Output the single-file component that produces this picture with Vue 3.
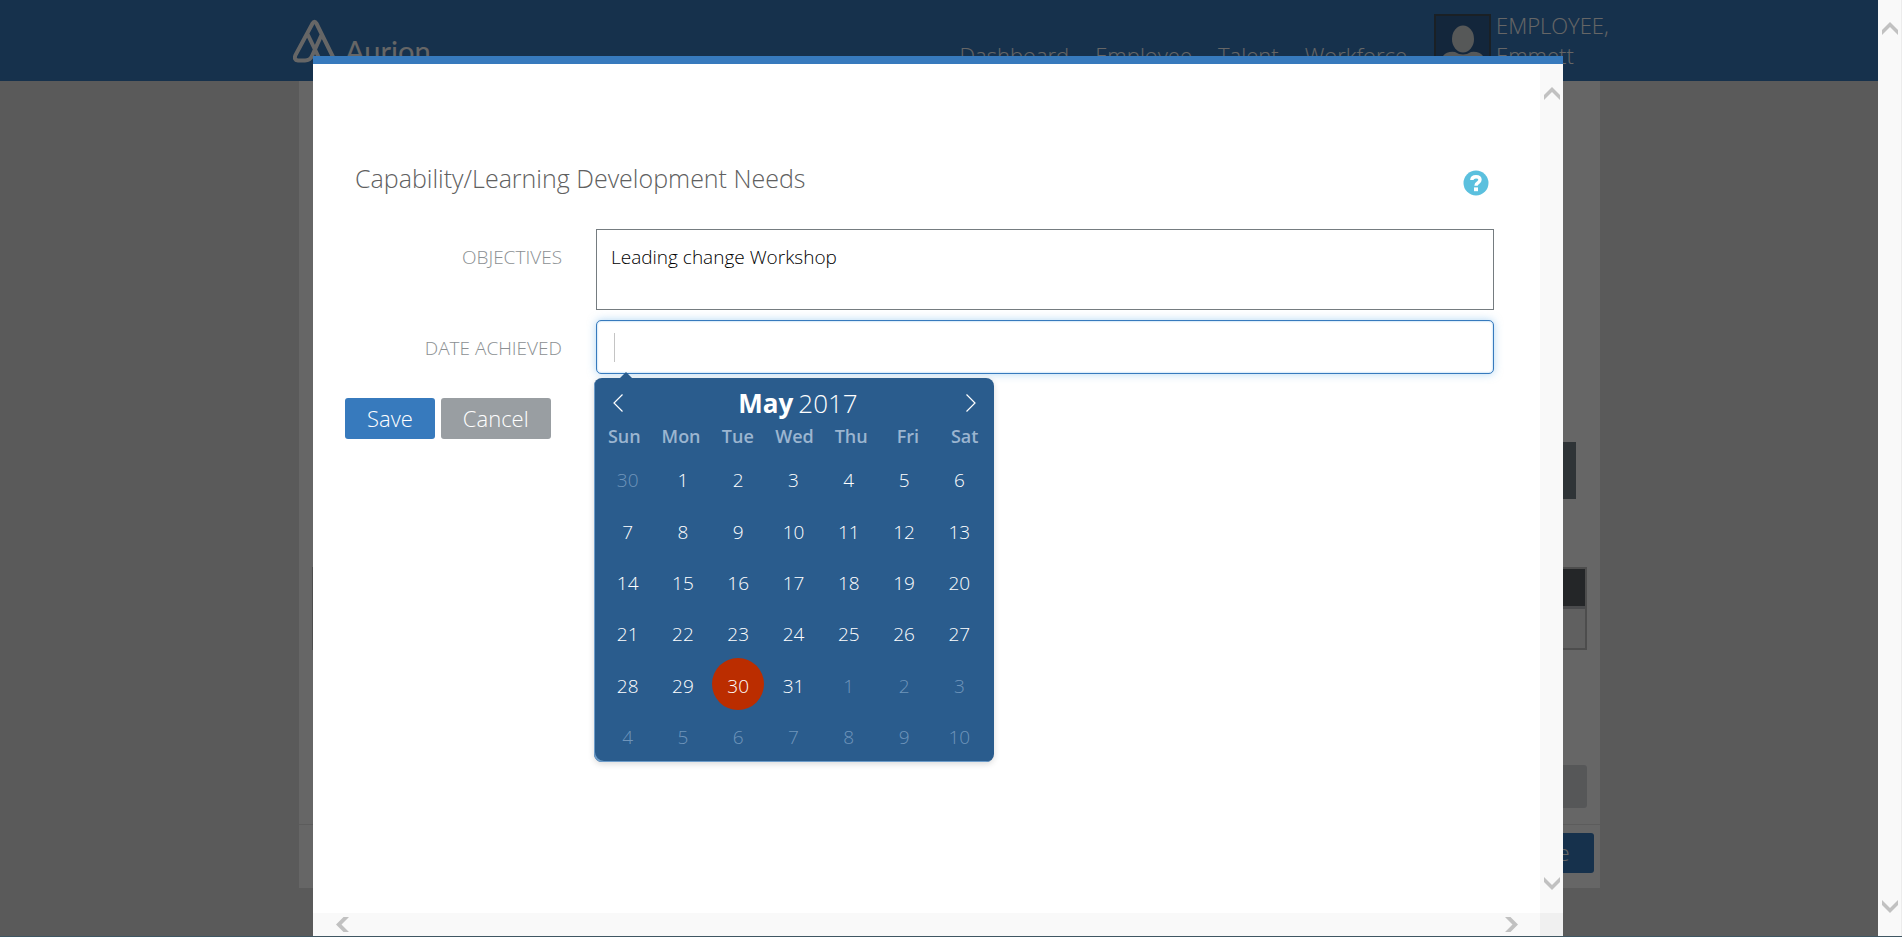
<script setup>
import { ref } from 'vue'

const objectives = ref('Leading change Workshop')
const dateAchieved = ref('')
const navItems = ['Dashboard', 'Employee', 'Talent', 'Workforce']
const weekdays = ['Sun', 'Mon', 'Tue', 'Wed', 'Thu', 'Fri', 'Sat']

const days = []
days.push({ key: 'p30', label: 30, other: true })
for (let d = 1; d <= 31; d++) days.push({ key: 'c' + d, label: d, today: d === 30 })
for (let d = 1; d <= 10; d++) days.push({ key: 'n' + d, label: d, other: true })
const weeks = []
for (let i = 0; i < days.length; i += 7) weeks.push(days.slice(i, i + 7))
</script>

<template>
  <div class="window">
    <div class="viewport">
      <header class="topbar">
        <div class="topbar-inner">
          <a class="brand" href="#">
            <svg class="brand-mark" viewBox="0 0 48 44" aria-hidden="true">
              <path d="M41 40 L23.5 4.5 Q21.5 1 19.5 4.5 L2.5 36 Q.5 41 5 41.500 L12 41.500 Q17 41.500 19 37 L28.500 16 M14.500 15 L27 41 M41 40 L43 44" />
            </svg>
            <span class="brand-name">Aurion</span>
          </a>
          <nav class="menu">
            <a v-for="item in navItems" :key="item" href="#">{{ item }}</a>
          </nav>
          <a class="user" href="#">
            <svg class="avatar" viewBox="0 0 57 57" aria-hidden="true">
              <rect x="1" y="1" width="55" height="55" fill="#305f93" stroke="#41505d" stroke-width="2" />
              <ellipse cx="29" cy="25" rx="11" ry="13.500" fill="#d8dcdc" />
              <path d="M9 57 V42 Q13 37 21 38 Q29 43 37 38 Q45 37 49 42 V57 Z" fill="#d8dcdc" />
            </svg>
            <span class="user-name">EMPLOYEE,<br />Emmett</span>
          </a>
        </div>
      </header>

      <main class="panel">
        <div class="panel-body">
          <div class="banner"></div>
          <div class="grid-box">
            <div class="grid-head"></div>
            <div class="grid-row"></div>
          </div>
          <div class="grey-bar"></div>
        </div>
        <footer class="panel-foot">
          <button type="button" class="foot-save">Save</button>
        </footer>
      </main>

      <div class="overlay">
        <section class="modal" role="dialog" aria-labelledby="dialog-title">
          <div class="modal-main">
            <form class="modal-content" @submit.prevent>
              <div class="title-row">
                <h1 id="dialog-title">Capability/Learning Development Needs</h1>
                <button type="button" class="help" aria-label="Help">
                  <svg viewBox="0 0 26 26" aria-hidden="true">
                    <circle cx="13" cy="13" r="12.500" fill="#5bc0de" />
                    <path d="M8.800 10 Q9 6.700 13 6.700 Q17 6.700 17 9.800 Q17 11.500 15 12.800 Q13 14 13 15.800" fill="none" stroke="#fff" stroke-width="3.400" />
                    <rect x="11" y="17.400" width="4" height="3.800" fill="#fff" />
                  </svg>
                </button>
              </div>

              <div class="field">
                <label for="objectives">OBJECTIVES</label>
                <textarea id="objectives" v-model="objectives"></textarea>
              </div>
              <div class="field">
                <label for="achieved">DATE ACHIEVED</label>
                <div class="date-wrap">
                  <input id="achieved" v-model="dateAchieved" type="text" />
                  <span class="caret"></span>
                  <div class="calendar">
                    <div class="cal-head">
                      <button type="button" aria-label="Previous month">
                        <svg viewBox="0 0 12 20" aria-hidden="true"><path d="M10.500 1.500 L2 10 L10.500 18.500" /></svg>
                      </button>
                      <div class="cal-title"><b>May</b><span>2017</span></div>
                      <button type="button" aria-label="Next month">
                        <svg viewBox="0 0 12 20" aria-hidden="true"><path d="M1.500 1.500 L10 10 L1.500 18.500" /></svg>
                      </button>
                    </div>
                    <div class="weekdays">
                      <span v-for="w in weekdays" :key="w">{{ w }}</span>
                    </div>
                    <div class="days">
                      <div v-for="(week, i) in weeks" :key="i" class="week">
                        <button
                          v-for="d in week"
                          :key="d.key"
                          type="button"
                          :class="['day', { other: d.other, today: d.today }]"
                        >{{ d.label }}</button>
                      </div>
                    </div>
                  </div>
                </div>
              </div>

              <div class="actions">
                <button type="submit" class="btn primary">Save</button>
                <button type="button" class="btn neutral">Cancel</button>
              </div>
            </form>
            <div class="vbar modal-vbar">
              <svg viewBox="0 0 16 13" aria-hidden="true"><path d="M0 8 L8 0 L16 8 V13 L8 5 L0 13 Z" /></svg>
              <svg viewBox="0 0 16 13" aria-hidden="true"><path d="M0 0 L8 8 L16 0 V5 L8 13 L0 5 Z" /></svg>
            </div>
          </div>
          <div class="hbar">
            <div class="hbar-track">
              <svg viewBox="0 0 13 15" aria-hidden="true"><path d="M7.500 0 H13 L5.500 7.500 L13 15 H7.500 L0 7.500 Z" /></svg>
              <svg viewBox="0 0 13 15" aria-hidden="true"><path d="M5.500 0 H0 L7.500 7.500 L0 15 H5.500 L13 7.500 Z" /></svg>
            </div>
            <div class="corner"></div>
          </div>
        </section>
      </div>
    </div>
    <div class="vbar page-vbar">
      <svg viewBox="0 0 16 13" aria-hidden="true"><path d="M0 8 L8 0 L16 8 V13 L8 5 L0 13 Z" /></svg>
      <svg viewBox="0 0 16 13" aria-hidden="true"><path d="M0 0 L8 8 L16 0 V5 L8 13 L0 5 Z" /></svg>
    </div>
  </div>
  <div class="taskbar"></div>
</template>

<style>
html,
body {
  margin: 0;
  overflow: hidden;
}
</style>

<style scoped>
* {
  box-sizing: border-box;
}

button,
input,
textarea {
  font: inherit;
  margin: 0;
}

button {
  border: 0;
  padding: 0;
  background: none;
  cursor: pointer;
}

.window {
  display: flex;
  height: calc(100vh - 1px);
  font-family: "Open Sans", "Noto Sans", sans-serif;
  font-weight: 300;
}

.taskbar {
  height: 1px;
  background: #3f5662;
}

.viewport {
  position: relative;
  flex: 1;
  overflow: hidden;
  background: #e1e1e1;
}

/* header */
.topbar {
  height: 81px;
  background: #377abd;
}

.topbar-inner {
  display: flex;
  align-items: flex-start;
  max-width: 1340px;
  margin: 0 auto;
  padding: 0 0 0 24px;
}

.brand {
  display: flex;
  color: #fff;
  text-decoration: none;
}

.brand-mark {
  width: 48px;
  height: 44px;
  margin-top: 19px;
  fill: none;
  stroke: #fff;
  stroke-width: 4;
}

.brand-name {
  margin: 33px 0 0 4px;
  font-family: Lato, sans-serif;
  font-weight: 400;
  font-size: 29px;
  line-height: 36px;
}

.menu {
  display: flex;
  gap: 26px;
  margin: 40px 27px 0 auto;
  font-size: 22px;
  line-height: 30px;
}

.menu a,
.user {
  color: #fff;
  text-decoration: none;
}

.user {
  display: flex;
  gap: 5px;
}

.avatar {
  width: 57px;
  height: 57px;
  margin-top: 14px;
}

.user-name {
  width: 113px;
  margin-top: 10px;
  font-size: 22px;
  line-height: 30px;
}

/* page behind the dialog */
.panel {
  width: 1301px;
  max-width: 100%;
  margin: 0 auto;
  position: relative;
  left: 10px;
  background: #fff;
}

.panel-body {
  padding: 361px 13px 16px;
}

.banner {
  height: 57px;
  margin: 0 11px;
  background: #75828a;
}

.grid-box {
  margin-top: 68px;
  border: 2px solid #c0c0c0;
}

.grid-head {
  height: 40px;
  background: #5a5f64;
  border-bottom: 3px solid #b8bcc0;
}

.grid-row {
  height: 39px;
  background: #f0f0f0;
}

.grey-bar {
  height: 43px;
  margin: 115px 0 0 11px;
  border-radius: 3px;
  background: #d7dadd;
}

.panel-foot {
  display: flex;
  justify-content: flex-end;
  padding: 8px 6px 15px;
  border-top: 1px solid #e5e5e5;
}

.foot-save {
  height: 40px;
  padding: 0 24px 2px;
  border-radius: 3px;
  background: #377abd;
  color: #fff;
  font-size: 22px;
}

/* dialog */
.overlay {
  position: absolute;
  inset: 0;
  display: flex;
  justify-content: center;
  padding: 56px 2px 0 0;
  background: rgba(0, 0, 0, 0.6);
}

.modal {
  display: flex;
  flex-direction: column;
  width: 1250px;
  max-width: 100%;
  border-top: 8px solid #377abd;
  background: #fff;
}

.modal-main {
  flex: 1;
  display: flex;
  min-height: 0;
}

.modal-content {
  flex: 1;
  padding: 94px 46px 0 32px;
}

.title-row {
  display: flex;
  justify-content: space-between;
  align-items: flex-start;
  height: 43px;
  margin-bottom: 28px;
  padding: 2px 5px 0 10px;
}

h1 {
  margin: 0;
  font-weight: 300;
  font-size: 25px;
  line-height: 36px;
  color: #606060;
}

.help {
  width: 26px;
  height: 26px;
  margin-top: 10px;
}

svg {
  display: block;
}

.field {
  display: grid;
  grid-template-columns: 217px 1fr;
  column-gap: 34px;
  margin-bottom: 10px;
}

.field label {
  padding-top: 15px;
  text-align: right;
  font-size: 19px;
  line-height: 26px;
  color: #8b8f92;
}

textarea {
  display: block;
  width: 100%;
  height: 81px;
  padding: 14px;
  border: 1px solid #757c80;
  outline: 0;
  resize: none;
  font-size: 19px;
  line-height: 26px;
  color: #000;
}

.date-wrap {
  position: relative;
}

input {
  display: block;
  width: 100%;
  height: 54px;
  padding: 0 14px;
  border: 1px solid #377abd;
  border-radius: 5px;
  outline: 0;
  box-shadow: 0 0 8px rgba(102, 175, 233, 0.5), inset 0 0 2px rgba(102, 175, 233, 0.8);
  font-size: 19px;
}

.caret {
  position: absolute;
  left: 18px;
  top: 13px;
  width: 1px;
  height: 29px;
  background: #c4c4c4;
}

/* calendar */
.calendar {
  position: absolute;
  top: 58px;
  left: -2px;
  width: 400px;
  padding: 4px 7px 1px 6px;
  border-radius: 8px;
  background: #2a5c8d;
  box-shadow: inset 2px -2px 0 -1px #6d9cc9, 0 2px 6px rgba(0, 0, 0, 0.15);
  color: #fff;
}

.calendar::before {
  content: "";
  position: absolute;
  top: -6px;
  left: 26px;
  border: 6px solid transparent;
  border-top-width: 0;
  border-bottom-color: #2a5c8d;
}

.cal-head {
  display: flex;
  justify-content: space-between;
  align-items: center;
  height: 42px;
  padding: 0 10px 0 12px;
}

.cal-head svg {
  width: 12px;
  height: 20px;
  fill: none;
  stroke: #fff;
  stroke-width: 1.200;
}

.cal-title {
  display: flex;
  gap: 5px;
  padding-left: 7px;
  font-size: 26px;
  line-height: 38px;
}

.cal-title b {
  font-weight: 700;
}

.weekdays {
  display: grid;
  grid-template-columns: repeat(7, 1fr);
  height: 29px;
  margin: 0 -6px 0 -4px;
  text-align: center;
  font-size: 18px;
  line-height: 25px;
  font-weight: 600;
  color: #9bb5d0;
}

.days {
  display: grid;
  grid-template-rows: repeat(6, minmax(0, 1fr));
  height: 308px;
}

.week {
  display: grid;
  grid-template-columns: repeat(7, 1fr);
  grid-template-rows: 100%;
  align-items: center;
  justify-items: center;
}

.day {
  width: 52px;
  height: 52px;
  padding-top: 3px;
  border-radius: 50%;
  color: #fff;
  font-size: 19px;
  line-height: 26px;
}

.day.other {
  color: #6f95bb;
}

.day.today {
  background: #bb2d00;
}

.actions {
  display: flex;
  gap: 6px;
  margin-top: 24px;
}

.btn {
  height: 41px;
  border-radius: 3px;
  padding: 0 22px 2px;
  color: #fff;
  font-size: 22px;
  line-height: 32px;
}

.primary {
  background: #377abd;
}

.neutral {
  background: #999ea2;
}

/* scroll bars */
.vbar {
  display: flex;
  flex-direction: column;
  justify-content: space-between;
  background: #f9f9f9;
}

.vbar svg {
  width: 16px;
  height: 13px;
  fill: #c1c1c1;
}

.modal-vbar {
  width: 23px;
  padding: 23px 3px 23px 4px;
}

.page-vbar {
  width: 24px;
  padding: 22px 3px 23px 4px;
  border-right: 1px solid #ececec;
}

.hbar {
  display: flex;
  height: 23px;
}

.hbar-track {
  flex: 1;
  display: flex;
  justify-content: space-between;
  padding: 4px 22px 4px 23px;
  background: #f9f9f9;
}

.hbar-track svg {
  width: 13px;
  height: 15px;
  fill: #c1c1c1;
}

.corner {
  width: 23px;
  background: #f0f0f0;
}
</style>
